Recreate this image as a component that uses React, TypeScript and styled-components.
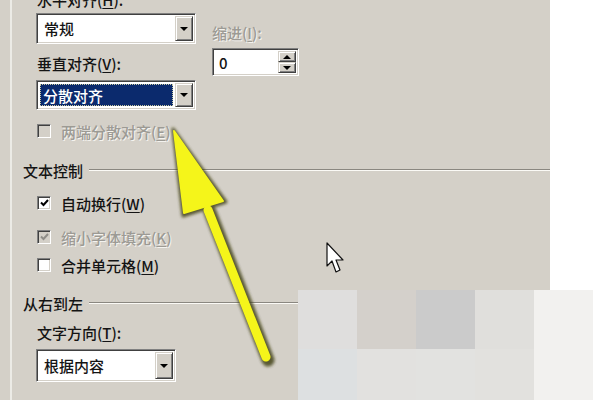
import React from "react";
import styled, { createGlobalStyle, css } from "styled-components";

const Global = createGlobalStyle`
  html, body { margin: 0; padding: 0; background: #fff; }
  #root { width: 600px; height: 400px; overflow: hidden; }
  * { box-sizing: border-box; }
`;

const Page = styled.div`
  position: relative;
  width: 600px;
  height: 400px;
  display: flex;
  overflow: hidden;
  font-family: "Noto Sans CJK SC", "Liberation Sans", sans-serif;
  font-size: 15px;
  font-weight: 500;
  color: #141414;
`;

const Panel = styled.div`
  width: 550px;
  height: 400px;
  background: #d4d0c8;
  padding-left: 10px;
`;

const Inner = styled.div`
  height: 100%;
  border-left: 2px solid #ecebe6;
  padding-left: 11px;
  display: flex;
  flex-direction: column;
`;

const TopArea = styled.div`
  display: flex;
  padding-left: 13px;
  gap: 15px;
`;

const Col = styled.div<{ $pt?: number; $w?: number }>`
  display: flex;
  flex-direction: column;
  padding-top: ${(p) => p.$pt ?? 0}px;
  width: ${(p) => (p.$w ? `${p.$w}px` : "auto")};
`;

const Label = styled.div<{ $mt?: number; $disabled?: boolean }>`
  height: 20px;
  line-height: 20px;
  margin-top: ${(p) => p.$mt ?? 0}px;
  padding-left: 1px;
  white-space: nowrap;
  color: ${(p) => (p.$disabled ? "#9c9a94" : "#141414")};
  ${(p) => p.$disabled && css`text-shadow: 1px 1px 0 #f4f3ef;`}
`;

const sunken = css`
  border-top: 1px solid #808080;
  border-left: 1px solid #808080;
  border-right: 1px solid #fff;
  border-bottom: 1px solid #fff;
  box-shadow: inset 1px 1px 0 #404040, inset -1px -1px 0 #d4d0c8;
`;

const Combo = styled.div<{ $w: number; $h: number; $mt?: number }>`
  ${sunken}
  width: ${(p) => p.$w}px;
  height: ${(p) => p.$h}px;
  margin-top: ${(p) => p.$mt ?? 0}px;
  background: #fff;
  display: flex;
  align-items: stretch;
  padding: 2px;
`;

const ComboText = styled.div<{ $selected?: boolean }>`
  flex: 1;
  display: flex;
  align-items: center;
  padding-left: 4px;
  margin: 1px 2px 1px 1px;
  white-space: nowrap;
  ${(p) =>
    p.$selected &&
    css`
      background: #0b2a6d;
      color: #fff;
      outline: 1px dotted #c8c8a0;
      outline-offset: -1px;
      padding-left: 3px;
    `}
`;

const raised = css`
  background: #d4d0c8;
  border-top: 1px solid #d4d0c8;
  border-left: 1px solid #d4d0c8;
  border-right: 1px solid #404040;
  border-bottom: 1px solid #404040;
  box-shadow: inset 1px 1px 0 #fff, inset -1px -1px 0 #808080;
`;

const DropBtn = styled.div`
  ${raised}
  width: 18px;
  display: flex;
  align-items: center;
  justify-content: center;
`;

const Tri = styled.div<{ $up?: boolean }>`
  width: 0;
  height: 0;
  border-left: 4px solid transparent;
  border-right: 4px solid transparent;
  ${(p) =>
    p.$up
      ? css`border-bottom: 4px solid #000;`
      : css`border-top: 4px solid #000;`}
`;

const Spin = styled.div`
  ${sunken}
  width: 87px;
  height: 28px;
  margin-top: 5px;
  margin-left: 1px;
  background: #fff;
  display: flex;
  padding: 2px;
`;

const SpinText = styled.div`
  flex: 1;
  display: flex;
  align-items: center;
  padding-left: 4px;
`;

const SpinBtns = styled.div`
  width: 18px;
  display: flex;
  flex-direction: column;
`;

const SpinBtn = styled.div`
  ${raised}
  flex: 1;
  display: flex;
  align-items: center;
  justify-content: center;
`;

const CheckRow = styled.div<{ $mt: number; $disabled?: boolean }>`
  display: flex;
  align-items: center;
  height: 20px;
  margin-top: ${(p) => p.$mt}px;
  padding-left: 14px;
  gap: 10px;
  white-space: nowrap;
  color: ${(p) => (p.$disabled ? "#9c9a94" : "#141414")};
  ${(p) => p.$disabled && css`text-shadow: 1px 1px 0 #f4f3ef;`}
`;

const Box = styled.div<{ $disabled?: boolean }>`
  ${sunken}
  width: 14px;
  height: 14px;
  background: ${(p) => (p.$disabled ? "#d4d0c8" : "#fff")};
  display: flex;
  align-items: center;
  justify-content: center;
  text-shadow: none;
`;

const Section = styled.div<{ $mt: number }>`
  display: flex;
  align-items: center;
  height: 20px;
  margin-top: ${(p) => p.$mt}px;
  gap: 6px;
  white-space: nowrap;
`;

const Rule = styled.div`
  flex: 1;
  height: 2px;
  border-top: 1px solid #8a8780;
  border-bottom: 1px solid #fbfaf6;
`;

const Indented = styled.div`
  padding-left: 13px;
  display: flex;
  flex-direction: column;
`;

const Key = styled.span`
  text-decoration: underline;
  text-underline-offset: 2px;
`;

const WhiteArea = styled.div`
  flex: 1;
  background: #fff;
`;

const Overlay = styled.svg`
  position: absolute;
  left: 0;
  top: 0;
  pointer-events: none;
`;

const Mosaic = styled.div`
  position: absolute;
  left: 298px;
  top: 290px;
  display: grid;
  grid-template-columns: repeat(5, 59px);
  grid-template-rows: 59px 59px;
`;

const Tile = styled.div<{ $c: string }>`
  background: ${(p) => p.$c};
`;

const Check = ({ color }: { color: string }) => (
  <svg width="9" height="8" viewBox="0 0 9 8">
    <path d="M1 3.5 L3.5 6 L8 1" stroke={color} strokeWidth="2" fill="none" />
  </svg>
);

const tiles = [
  "#dfdedd", "#d4d0cb", "#cbcbcb", "#e0dfdc", "#f2f1ef",
  "#dde0e1", "#e2e1df", "#e2e2e0", "#e2e1de", "#f2f1ef",
];

export default function App() {
  return (
    <>
      <Global />
      <Page>
        <Panel>
          <Inner>
            <TopArea>
              <Col $w={160}>
                <Label $mt={-10}>水平对齐(<Key>H</Key>):</Label>
                <Combo $w={160} $h={31} $mt={3}>
                  <ComboText>常规</ComboText>
                  <DropBtn>
                    <Tri />
                  </DropBtn>
                </Combo>
                <Label $mt={10}>垂直对齐(<Key>V</Key>):</Label>
                <Combo $w={160} $h={30} $mt={6}>
                  <ComboText $selected>分散对齐</ComboText>
                  <DropBtn>
                    <Tri />
                  </DropBtn>
                </Combo>
              </Col>
              <Col $pt={23}>
                <Label $disabled>缩进(<Key>I</Key>):</Label>
                <Spin>
                  <SpinText>0</SpinText>
                  <SpinBtns>
                    <SpinBtn>
                      <Tri $up />
                    </SpinBtn>
                    <SpinBtn>
                      <Tri />
                    </SpinBtn>
                  </SpinBtns>
                </Spin>
              </Col>
            </TopArea>
            <CheckRow $mt={11} $disabled>
              <Box $disabled />
              <span>两端分散对齐(<Key>E</Key>)</span>
            </CheckRow>
            <Section $mt={19}>
              文本控制
              <Rule />
            </Section>
            <CheckRow $mt={13}>
              <Box>
                <Check color="#000" />
              </Box>
              <span>自动换行(<Key>W</Key>)</span>
            </CheckRow>
            <CheckRow $mt={14} $disabled>
              <Box $disabled>
                <Check color="#8f8d88" />
              </Box>
              <span>缩小字体填充(<Key>K</Key>)</span>
            </CheckRow>
            <CheckRow $mt={8}>
              <Box />
              <span>合并单元格(<Key>M</Key>)</span>
            </CheckRow>
            <Section $mt={18}>
              从右到左
              <Rule />
            </Section>
            <Indented>
              <Label $mt={10}>文字方向(<Key>T</Key>):</Label>
              <Combo $w={140} $h={33} $mt={6}>
                <ComboText>根据内容</ComboText>
                <DropBtn>
                  <Tri />
                </DropBtn>
              </Combo>
            </Indented>
          </Inner>
        </Panel>
        <WhiteArea />
        <Mosaic>
          {tiles.map((c, i) => (
            <Tile key={i} $c={c} />
          ))}
        </Mosaic>
        <Overlay width="600" height="400" viewBox="0 0 600 400">
          <defs>
            <filter id="sh" x="-20%" y="-20%" width="140%" height="140%">
              <feGaussianBlur stdDeviation="1.5" />
            </filter>
          </defs>
          <g filter="url(#sh)" opacity="0.8">
            <line x1="210" y1="212" x2="268" y2="360" stroke="#3a3a10" strokeWidth="13" strokeLinecap="round" />
            <polygon points="173,129 226,202 183,216" fill="#3a3a10" stroke="#3a3a10" strokeWidth="3" strokeLinejoin="round" />
          </g>
          <line x1="208" y1="210" x2="266" y2="357" stroke="#f5f51a" strokeWidth="9" strokeLinecap="round" />
          <polygon points="174,131 223,201 184,213" fill="#f5f51a" stroke="#f5f51a" strokeWidth="2" strokeLinejoin="round" />
          <path
            d="M327 243 L327 266 L332 261 L336 272 L340 270 L336 260 L343 260 Z"
            fill="#fff"
            stroke="#111"
            strokeWidth="1.2"
            strokeLinejoin="round"
          />
        </Overlay>
      </Page>
    </>
  );
}
